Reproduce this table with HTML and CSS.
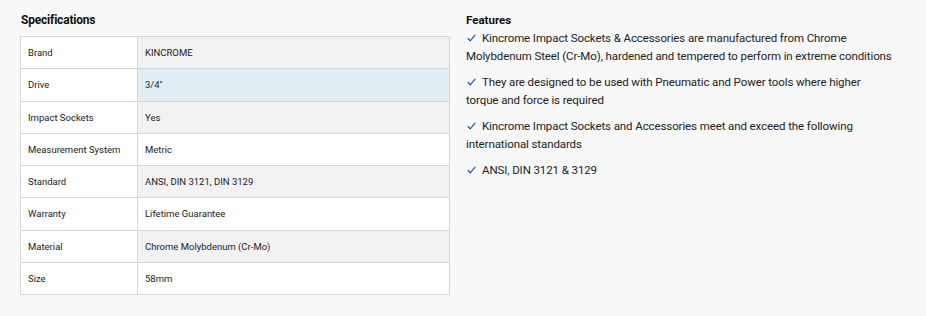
FILE: index.html
```html
<!DOCTYPE html>
<html lang="en">
<head>
<meta charset="utf-8">
<title>Specifications</title>
<link rel="stylesheet" href="styles.css">
</head>
<body>
<div class="wrap">
  <section class="specs">
    <h2 class="title">Specifications</h2>
    <table class="spec-table">
      <tbody>
        <tr><th>Brand</th><td>KINCROME</td></tr>
        <tr class="hover"><th>Drive</th><td>3/4"</td></tr>
        <tr><th>Impact Sockets</th><td>Yes</td></tr>
        <tr><th>Measurement System</th><td>Metric</td></tr>
        <tr><th>Standard</th><td>ANSI, DIN 3121, DIN 3129</td></tr>
        <tr><th>Warranty</th><td>Lifetime Guarantee</td></tr>
        <tr><th>Material</th><td>Chrome Molybdenum (Cr-Mo)</td></tr>
        <tr><th>Size</th><td>58mm</td></tr>
      </tbody>
    </table>
  </section>
  <section class="features">
    <h2 class="ftitle">Features</h2>
    <p><svg class="tick" width="9" height="8" viewBox="0 0 9 8"><path d="M0.8 4.3 L3.3 6.8 L8.3 0.8" fill="none" stroke="#2d5fa6" stroke-width="1.3"/></svg>Kincrome Impact Sockets &amp; Accessories are manufactured from Chrome Molybdenum Steel (Cr-Mo), hardened and tempered to perform in extreme conditions</p>
    <p><svg class="tick" width="9" height="8" viewBox="0 0 9 8"><path d="M0.8 4.3 L3.3 6.8 L8.3 0.8" fill="none" stroke="#2d5fa6" stroke-width="1.3"/></svg>They are designed to be used with Pneumatic and Power tools where higher torque and force is required</p>
    <p><svg class="tick" width="9" height="8" viewBox="0 0 9 8"><path d="M0.8 4.3 L3.3 6.8 L8.3 0.8" fill="none" stroke="#2d5fa6" stroke-width="1.3"/></svg>Kincrome Impact Sockets and Accessories meet and exceed the following international standards</p>
    <p><svg class="tick" width="9" height="8" viewBox="0 0 9 8"><path d="M0.8 4.3 L3.3 6.8 L8.3 0.8" fill="none" stroke="#2d5fa6" stroke-width="1.3"/></svg>ANSI, DIN 3121 &amp; 3129</p>
  </section>
</div>
</body>
</html>
```
FILE: styles.css
```css
html, body {
  margin: 0;
  padding: 0;
  background: #f8f8f8;
  color: #222;
  font-family: "Roboto", "Liberation Sans", sans-serif;
}
.wrap {
  display: flex;
  padding: 10px 0 0 20px;
  gap: 16px;
}
.specs {
  width: 430px;
  flex: none;
}
.title {
  margin: 2px 0 8px 1px;
  font-size: 12px;
  font-weight: 700;
  line-height: 16px;
  color: #111;
  letter-spacing: -0.2px;
}
.spec-table {
  width: 100%;
  border-collapse: collapse;
  border: 1px solid #d0d0d0;
  font-size: 9.5px;
}
.spec-table th,
.spec-table td {
  height: 31.25px;
  padding: 0 7px;
  text-align: left;
  font-weight: 400;
  border: 1px solid #d6d6d6;
  color: #222;
}
.spec-table th {
  width: 102px;
  background: #ffffff;
}
.spec-table td {
  background: #ffffff;
}
.spec-table tr:nth-child(odd) td {
  background: #f2f2f2;
}
.spec-table tr.hover td {
  background: #e2edf4;
}
.features {
  flex: none;
  width: 428px;
  padding-top: 2px;
}
.ftitle {
  margin: 0 0 1px 0;
  font-size: 11.5px;
  font-weight: 700;
  line-height: 16px;
  color: #111;
}
.features p {
  margin: 0 0 8px 0;
  font-size: 11.5px;
  line-height: 18px;
  color: #222;
  letter-spacing: -0.1px;
}
.tick {
  display: inline-block;
  vertical-align: 0;
  margin: 0 6px 0 1px;
}
```
